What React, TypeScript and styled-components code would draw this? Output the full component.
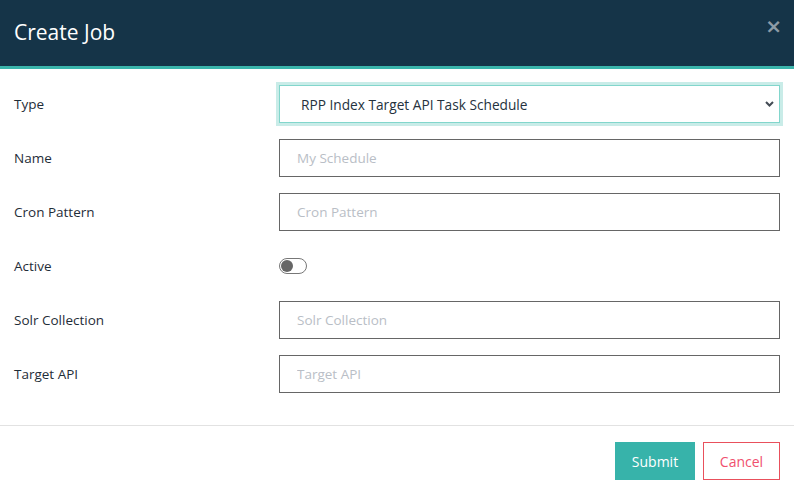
import React, { useState } from 'react';
import styled, { createGlobalStyle } from 'styled-components';

const GlobalStyle = createGlobalStyle`
  html, body {
    margin: 0;
    padding: 0;
    background: #ffffff;
    font-family: "Open Sans", "Noto Sans", sans-serif;
  }
  * {
    box-sizing: border-box;
  }
`;

const fields = [
  { label: 'Name', placeholder: 'My Schedule' },
  { label: 'Cron Pattern', placeholder: 'Cron Pattern' },
];

const moreFields = [
  { label: 'Solr Collection', placeholder: 'Solr Collection' },
  { label: 'Target API', placeholder: 'Target API' },
];

export default function App() {
  const [active, setActive] = useState(false);

  return (
    <>
      <GlobalStyle />
      <Modal>
        <Header>
          <Title>Create Job</Title>
          <Close aria-label="Close">&times;</Close>
        </Header>
        <Body>
          <Row>
            <Label>Type</Label>
            <SelectWrap>
              <Select defaultValue="rpp">
                <option value="rpp">RPP Index Target API Task Schedule</option>
              </Select>
              <Chevron width="9" height="6" viewBox="0 0 9 6">
                <path d="M1 1 L4.5 4.5 L8 1" fill="none" stroke="#444c55" strokeWidth="2" />
              </Chevron>
            </SelectWrap>
          </Row>
          {fields.map(f => (
            <Row key={f.label}>
              <Label>{f.label}</Label>
              <Input placeholder={f.placeholder} />
            </Row>
          ))}
          <Row>
            <Label>Active</Label>
            <Toggle $on={active} onClick={() => setActive(!active)}>
              <Knob $on={active} />
            </Toggle>
          </Row>
          {moreFields.map(f => (
            <Row key={f.label}>
              <Label>{f.label}</Label>
              <Input placeholder={f.placeholder} />
            </Row>
          ))}
        </Body>
        <Footer>
          <SubmitButton>Submit</SubmitButton>
          <CancelButton>Cancel</CancelButton>
        </Footer>
      </Modal>
    </>
  );
}

const Modal = styled.div`
  width: 794px;
  height: 496px;
  display: flex;
  flex-direction: column;
  background: #fff;
`;

const Header = styled.div`
  height: 69px;
  background: #153448;
  border-bottom: 3px solid #3ab4ab;
  display: flex;
  align-items: center;
  justify-content: space-between;
  padding: 0 12px 0 14px;
`;

const Title = styled.h1`
  margin: 0;
  color: #ffffff;
  font-size: 21px;
  font-weight: 400;
  padding-bottom: 3px;
`;

const Close = styled.span`
  color: #8d9ba6;
  font-family: "DejaVu Sans", sans-serif;
  font-weight: 700;
  font-size: 20px;
  line-height: 1;
  margin-bottom: 14px;
  cursor: pointer;
`;

const Body = styled.div`
  padding: 16px 14px 32px 14px;
  display: flex;
  flex-direction: column;
  gap: 16px;
  border-bottom: 1px solid #e2e2e2;
`;

const Row = styled.div`
  display: grid;
  grid-template-columns: 265px 501px;
  align-items: center;
  height: 38px;
`;

const Label = styled.label`
  font-size: 13.5px;
  color: #1f2d38;
`;

const SelectWrap = styled.div`
  position: relative;
  height: 38px;
`;

const Select = styled.select`
  appearance: none;
  width: 100%;
  height: 38px;
  border: 1px solid #82d6cc;
  box-shadow: 0 0 0 3px #c9ece8;
  border-radius: 0;
  background: #fff;
  padding: 0 30px 0 21px;
  font-family: "Open Sans", "Noto Sans", sans-serif;
  font-size: 13.7px;
  color: #25323d;
  outline: none;
`;

const Chevron = styled.svg`
  position: absolute;
  right: 6px;
  top: 16px;
  pointer-events: none;
`;

const Input = styled.input`
  width: 100%;
  height: 38px;
  border: 1px solid #666666;
  border-radius: 0;
  padding: 0 17px;
  font-family: "Open Sans", "Noto Sans", sans-serif;
  font-size: 13.5px;
  color: #25323d;
  outline: none;
  &::placeholder {
    color: #b9bec6;
  }
`;

const Toggle = styled.div<{ $on: boolean }>`
  width: 28px;
  height: 16px;
  border: 1px solid #777;
  border-radius: 8px;
  background: ${p => (p.$on ? '#3ab4ab' : '#fff')};
  position: relative;
  cursor: pointer;
`;

const Knob = styled.div<{ $on: boolean }>`
  position: absolute;
  top: 1px;
  left: ${p => (p.$on ? '13px' : '1px')};
  width: 12px;
  height: 12px;
  border-radius: 50%;
  background: ${p => (p.$on ? '#fff' : '#666')};
`;

const Footer = styled.div`
  display: flex;
  justify-content: flex-end;
  gap: 8px;
  padding: 16px 14px 16px 14px;
`;

const BaseButton = styled.button`
  height: 38px;
  border-radius: 0;
  font-family: "Open Sans", "Noto Sans", sans-serif;
  font-size: 14px;
  cursor: pointer;
`;

const SubmitButton = styled(BaseButton)`
  width: 80px;
  background: #37b3aa;
  border: 1px solid #37b3aa;
  color: #fff;
`;

const CancelButton = styled(BaseButton)`
  width: 77px;
  background: #fff;
  border: 1px solid #e9505c;
  color: #f0506e;
`;
